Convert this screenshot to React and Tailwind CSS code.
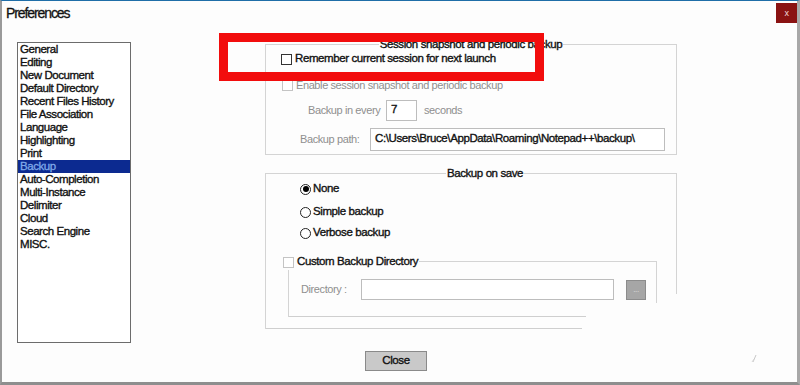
import React from "react";

const items = [
  "General",
  "Editing",
  "New Document",
  "Default Directory",
  "Recent Files History",
  "File Association",
  "Language",
  "Highlighting",
  "Print",
  "Backup",
  "Auto-Completion",
  "Multi-Instance",
  "Delimiter",
  "Cloud",
  "Search Engine",
  "MISC.",
];

const font = { fontFamily: '"Liberation Sans", Arial, sans-serif' };

function Check({ disabled }) {
  return (
    <span
      className={
        "inline-block w-[11px] h-[11px] border bg-white shrink-0 " +
        (disabled ? "border-[#c4c4c4]" : "border-[#333]")
      }
    />
  );
}

function Radio({ checked }) {
  return (
    <span className="w-[11px] h-[11px] rounded-full border border-[#222] bg-white flex items-center justify-center shrink-0">
      {checked && <span className="w-[6px] h-[6px] rounded-full bg-black" />}
    </span>
  );
}

const dark = "text-[11.5px] text-[#111] [-webkit-text-stroke:0.35px_#111]";
const gray = "text-[11px] text-[#8f8f8f]";

export default function App() {
  return (
    <div
      className="relative w-[800px] h-[385px] bg-[#fdfdfd] border-t border-t-[#1f6ea8] border-l-2 border-l-[#9a9a9a] border-r-[3px] border-r-[#a8a8a8] border-b-[3px] border-b-[#8e8e8e] flex flex-col overflow-hidden text-[11px] tracking-[-0.4px] text-black"
      style={font}
    >
      {/* Title bar */}
      <div className="h-[32px] flex items-start justify-between shrink-0">
        <div className="pl-[4px] pt-[4px] text-[14px] leading-[16px] tracking-[-1.1px] text-[#111] [-webkit-text-stroke:0.3px_#111]">
          Preferences
        </div>
        <div className="mt-[2px] w-[21px] h-[20px] bg-[#8a1212] flex items-center justify-center text-[#f0dada] text-[9px] leading-none">
          x
        </div>
      </div>

      {/* Body */}
      <div className="flex items-start">
        {/* List */}
        <div className="ml-[15px] mt-[9px] w-[114px] h-[301px] border border-[#6c6c6c] bg-white flex flex-col">
          {items.map((it) => (
            <div
              key={it}
              className={
                "h-[13px] leading-[13px] pl-[2px] text-[11.5px] tracking-[-0.45px] " +
                (it === "Backup"
                  ? "bg-[#0c2a90] text-[#7fa9ea] [-webkit-text-stroke:0.3px_#7fa9ea]"
                  : "text-[#111] [-webkit-text-stroke:0.35px_#111]")
              }
            >
              {it}
            </div>
          ))}
        </div>

        {/* Right column */}
        <div className="ml-[134px] mt-[11px] w-[412px] flex flex-col">
          {/* Group 1 */}
          <div className="h-[111px] border border-[#d4d4d4] flex flex-col">
            <div className={"-mt-[8px] h-[14px] leading-[14px] self-center px-[1px] bg-[#fdfdfd] " + dark}>
              Session snapshot and periodic backup
            </div>
            <div className={"h-[16px] flex items-center pl-[15px] gap-[3px] " + dark}>
              <Check />
              <span>Remember current session for next launch</span>
            </div>
            <div className={"mt-[10px] h-[16px] flex items-center pl-[16px] gap-[3px] " + gray}>
              <Check disabled />
              <span>Enable session snapshot and periodic backup</span>
            </div>
            <div className={"mt-[7px] h-[21px] flex items-center pl-[42px] " + gray}>
              <span className="w-[78px]">Backup in every</span>
              <span className={"w-[31px] h-[21px] border border-[#bdbdbd] bg-white pl-[4px] leading-[17px] " + dark}>
                7
              </span>
              <span className="ml-[7px]">seconds</span>
            </div>
            <div className={"mt-[7px] h-[23px] flex items-center pl-[34px] " + gray}>
              <span className="w-[70px]">Backup path:</span>
              <span className={"w-[295px] h-[23px] border border-[#bdbdbd] bg-white pl-[4px] leading-[19px] " + dark}>
                C:\Users\Bruce\AppData\Roaming\Notepad++\backup\
              </span>
            </div>
          </div>

          {/* Group 2 */}
          <div className="mt-[18px] h-[156px] border-t border-l border-[#d4d4d4] flex">
            <div className="flex-1 flex flex-col">
              <div className={"-mt-[8px] h-[14px] leading-[14px] self-center ml-[28px] px-[1px] bg-[#fdfdfd] " + dark}>
                Backup on save
              </div>
              <div className={"mt-[1px] h-[16px] flex items-center pl-[34px] gap-[2px] " + dark}>
                <Radio checked />
                <span>None</span>
              </div>
              <div className={"mt-[7px] h-[16px] flex items-center pl-[34px] gap-[2px] " + dark}>
                <Radio />
                <span>Simple backup</span>
              </div>
              <div className={"mt-[5px] h-[16px] flex items-center pl-[34px] gap-[2px] " + dark}>
                <Radio />
                <span>Verbose backup</span>
              </div>

              {/* Inner group */}
              <div className="mt-[20px] ml-[22px] w-[369px] h-[56px] border-t border-l border-[#d4d4d4] flex">
                <div className="flex-1 flex flex-col">
                  <div className={"-mt-[8px] -ml-[6px] h-[16px] self-start flex items-center gap-[3px] pr-[1px] bg-[#fdfdfd] " + dark}>
                    <Check disabled />
                    <span>Custom Backup Directory</span>
                  </div>
                  <div className={"mt-[9px] h-[21px] flex items-center pl-[12px] " + gray}>
                    <span className="w-[60px]">Directory :</span>
                    <span className="w-[253px] h-[21px] border border-[#bdbdbd] bg-white" />
                    <span className="ml-[12px] w-[20px] h-[20px] border border-[#8c8c8c] bg-[#a6a6a6] flex items-center justify-center text-[8px] leading-none text-[#e0e0e0]">
                      ...
                    </span>
                  </div>
                  <div className="mt-auto w-[297px] h-px bg-[#cfcfcf]" />
                </div>
                <div className="w-px h-[41px] bg-[#d4d4d4]" />
              </div>

              <div className="mt-auto w-[316px] h-px bg-[#cfcfcf]" />
            </div>
            <div className="w-px h-[120px] bg-[#d4d4d4]" />
          </div>

          {/* Close */}
          <div className={"mt-[22px] ml-[100px] w-[62px] h-[20px] border border-[#8a8a8a] bg-[#c9c9c9] flex items-center justify-center " + dark}>
            Close
          </div>
        </div>
      </div>

      {/* Red highlight rectangle (overlay) */}
      <div className="absolute left-[217px] top-[32px] w-[325px] h-[48px] border-[9px] border-[#f20d0d]" />

      {/* Resize grip */}
      <svg
        className="absolute left-[748px] top-[353px]"
        width="8"
        height="9"
        viewBox="0 0 8 9"
      >
        <path d="M6 1 L3 8" stroke="#c8c8c8" strokeWidth="1" />
        <path d="M4 5 L2 8" stroke="#d8d8d8" strokeWidth="1" />
      </svg>
    </div>
  );
}
